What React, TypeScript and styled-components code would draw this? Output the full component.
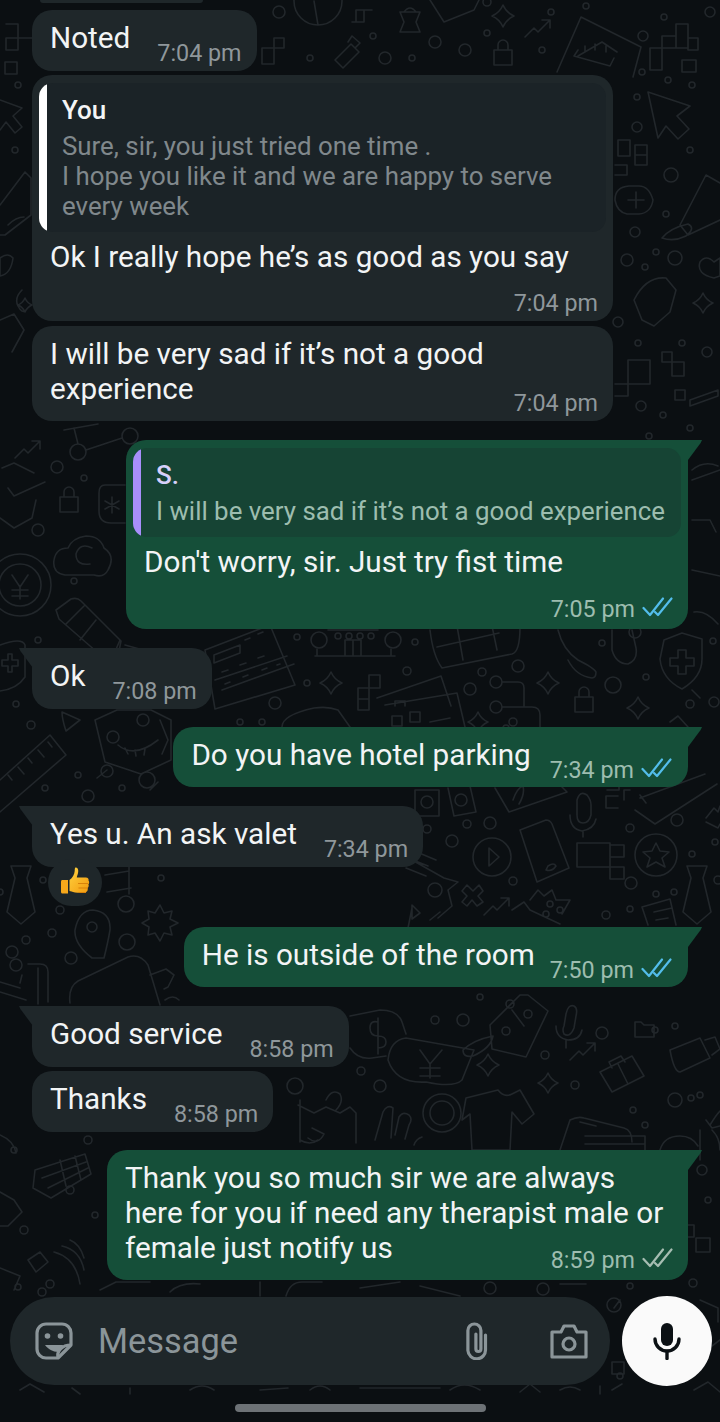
import React from "react";
import styled, { createGlobalStyle } from "styled-components";

const GlobalStyle = createGlobalStyle`
  html, body {
    margin: 0;
    padding: 0;
    background: #0b0f12;
  }
`;

const Page = styled.div`
  position: relative;
  width: 720px;
  height: 1422px;
  overflow: hidden;
  display: flex;
  flex-direction: column;
  background: #0b0f12;
  font-family: Roboto, "Liberation Sans", sans-serif;
`;

const Wallpaper = styled.svg`
  position: absolute;
  inset: 0;
  fill: none;
  stroke: #22272b;
  stroke-width: 1.6;
  stroke-linejoin: round;
  stroke-linecap: round;
`;

const Chat = styled.div`
  position: relative;
  display: flex;
  flex-direction: column;
  padding: 0 32px;
`;

const Sliver = styled.div`
  width: 163px;
  height: 3px;
  margin-left: 8px;
  background: #1f272a;
  border-radius: 0 0 12px 12px;
`;

const Row = styled.div<{ $out?: boolean; $top: number }>`
  position: relative;
  display: flex;
  justify-content: ${(p) => (p.$out ? "flex-end" : "flex-start")};
  margin-top: ${(p) => p.$top}px;
`;

const Bubble = styled.div<{ $out?: boolean; $tail?: boolean; $width?: number; $stack?: boolean }>`
  position: relative;
  box-sizing: border-box;
  display: flex;
  flex-direction: ${(p) => (p.$stack ? "column" : "row")};
  align-items: ${(p) => (p.$stack ? "stretch" : "flex-end")};
  ${(p) => (p.$width ? `width: ${p.$width}px;` : "")}
  padding: ${(p) => (p.$stack ? (p.$out ? "10px 15px 9px 18px" : "10px 15px 7px 18px") : p.$out ? "10px 16px 6px 18px" : "10px 15px 7px 18px")};
  background: ${(p) => (p.$out ? "#154f39" : "#1f272a")};
  border-radius: ${(p) => (p.$tail ? (p.$out ? "20px 0 20px 20px" : "0 20px 20px 20px") : "20px")};

  ${(p) =>
    p.$tail
      ? `&::before {
    content: "";
    position: absolute;
    top: 0;
    ${p.$out ? "right: -14px;" : "left: -13px;"}
    width: 14px;
    height: 20px;
    background: inherit;
    clip-path: ${p.$out ? "polygon(0 0, 100% 0, 90% 15%, 0 100%)" : "polygon(0 0, 100% 0, 100% 100%, 10% 15%)"};
  }`
      : ""}
`;

const Text = styled.div<{ $stack?: boolean }>`
  font-size: 29.7px;
  line-height: 35px;
  color: #f2f4f5;
  white-space: nowrap;
  ${(p) => (p.$stack ? "" : "margin-bottom: 9px;")}
`;

const Meta = styled.div<{ $stack?: boolean; $overlap?: number; $gap?: number }>`
  display: flex;
  align-items: center;
  gap: 7px;
  height: 26px;
  ${(p) =>
    p.$stack
      ? `align-self: flex-end; margin-top: ${p.$overlap ?? 0}px;`
      : `margin-left: ${p.$gap ?? 27}px;`}
`;

const Time = styled.span<{ $out?: boolean }>`
  font-size: 23.3px;
  line-height: 26px;
  margin-top: 3px;
  color: ${(p) => (p.$out ? "#9dbdaf" : "#8f979b")};
  white-space: nowrap;
`;

const Quote = styled.div<{ $out?: boolean }>`
  position: relative;
  overflow: hidden;
  box-sizing: border-box;
  margin: -2px -8px 7px -11px;
  padding: 12px 15px 11px 23px;
  background: ${(p) => (p.$out ? "#164434" : "#1b2327")};
  border-radius: 14px;

  &::before {
    content: "";
    position: absolute;
    left: 0;
    top: 0;
    bottom: 0;
    width: 8px;
    background: ${(p) => (p.$out ? "#a88ffb" : "#ffffff")};
  }
`;

const QuoteName = styled.div<{ $out?: boolean }>`
  font-size: 26px;
  line-height: 30px;
  font-weight: 500;
  color: ${(p) => (p.$out ? "#d6d0fa" : "#f4f5f6")};
  margin-bottom: 6px;
`;

const QuoteBody = styled.div<{ $out?: boolean }>`
  font-size: 25.85px;
  line-height: 30px;
  color: ${(p) => (p.$out ? "#9dbdaf" : "#80888c")};
  white-space: nowrap;
`;

const Reaction = styled.div`
  position: absolute;
  left: 16px;
  top: 53px;
  width: 54px;
  height: 47px;
  display: flex;
  align-items: center;
  justify-content: center;
  border-radius: 24px;
  background: #1f272a;
`;

const Composer = styled.div`
  position: relative;
  display: flex;
  align-items: center;
  gap: 12px;
  margin-top: 16px;
  padding: 0 8px 0 10px;
`;

const InputBar = styled.div`
  flex: 1;
  height: 88px;
  box-sizing: border-box;
  display: flex;
  align-items: center;
  padding: 0 22px 0 25px;
  border-radius: 44px;
  background: #1f272a;
`;

const Placeholder = styled.span`
  flex: 1;
  margin-left: 25px;
  font-size: 34.4px;
  color: #8b9599;
`;

const ClipSlot = styled.span`
  display: flex;
  margin-right: 61px;
`;

const MicButton = styled.div`
  width: 90px;
  height: 90px;
  display: flex;
  align-items: center;
  justify-content: center;
  border-radius: 50%;
  background: #fafafa;
`;

const HomeBar = styled.div`
  position: relative;
  align-self: center;
  width: 251px;
  height: 8px;
  margin-top: 18px;
  border-radius: 4px;
  background: #6d7276;
`;

const c = (x: number, y: number, r: number) =>
  `M${x - r} ${y}a${r} ${r} 0 1 0 ${2 * r} 0a${r} ${r} 0 1 0 ${-2 * r} 0`;
const spark = (x: number, y: number, s: number) => {
  const k = s * 0.3;
  return `M${x} ${y - s}Q${x + k} ${y - k} ${x + s} ${y}Q${x + k} ${y + k} ${x} ${y + s}Q${x - k} ${y + k} ${x - s} ${y}Q${x - k} ${y - k} ${x} ${y - s}z`;
};
const trend = (x: number, y: number) => `M${x} ${y}l9-9 4 4 12-12m-8 0h8v8`;
const lock = (x: number, y: number) =>
  `M${x - 9} ${y}h18v15h-18zM${x - 5} ${y}v-5a5 5 0 0 1 10 0v5`;
const box = (x: number, y: number, w: number, h: number) => `M${x} ${y}h${w}v${h}h${-w}z`;
const dots = (list: number[][]) => list.map(([x, y, r]) => c(x, y, r)).join("");

// wallpaper doodles, page coordinates, only the parts seen between the bubbles
const doodles = [
  dots([
    [18, 85, 3], [15, 150, 3], [279, 12, 6], [373, 36, 3], [310, 58, 3], [385, 58, 6], [412, 58, 3],
    [435, 42, 6], [465, 50, 6], [487, 33, 3], [542, 50, 3], [487, 2, 4], [551, 12, 3], [586, 6, 3],
    [643, 36, 5], [664, 17, 3], [710, 12, 5], [642, 72, 3], [668, 80, 3], [692, 85, 3], [637, 97, 3],
    [637, 127, 5], [690, 150, 3], [671, 175, 7], [666, 214, 3], [635, 232, 5], [627, 260, 6], [645, 267, 3],
    [656, 252, 3], [675, 258, 7], [618, 322, 5], [638, 343, 3], [682, 343, 3], [707, 352, 5], [641, 406, 5],
    [663, 415, 3], [690, 428, 3], [649, 436, 3],
    [57, 467, 6], [84, 478, 3], [38, 530, 6], [74, 581, 3], [38, 640, 3], [16, 704, 3], [31, 725, 4],
    [78, 775, 3], [45, 788, 3], [88, 796, 6], [122, 788, 3], [147, 780, 8],
    [297, 637, 3], [415, 642, 3], [275, 703, 6], [307, 683, 3], [407, 671, 4], [240, 722, 3], [262, 722, 3],
    [470, 689, 6], [482, 672, 4], [518, 666, 6], [602, 643, 3], [613, 685, 8], [646, 677, 3], [690, 704, 4],
    [714, 702, 5], [713, 641, 3], [506, 728, 3], [513, 722, 4],
    [427, 829, 4], [467, 824, 4], [490, 823, 6], [452, 841, 6], [513, 881, 4], [630, 828, 4], [631, 883, 6],
    [656, 894, 3], [674, 892, 3], [692, 854, 3], [715, 842, 3], [606, 915, 4], [630, 909, 3], [435, 890, 7],
    [677, 820, 6], [718, 880, 4],
    [126, 904, 8], [60, 910, 4], [52, 933, 4], [26, 940, 4], [43, 880, 3], [161, 878, 3], [71, 958, 6],
    [127, 942, 8], [0, 892, 3],
    [435, 1020, 4], [463, 1020, 6], [361, 1071, 4], [380, 1086, 6], [295, 1086, 8], [602, 1033, 6],
    [545, 1055, 4], [700, 1095, 3], [575, 1085, 4], [645, 1125, 3], [675, 1100, 7], [691, 1098, 3],
    [480, 997, 3], [675, 1026, 3], [633, 1110, 3], [655, 1030, 3],
    [70, 1190, 4], [24, 1230, 4], [88, 1140, 4], [95, 1215, 3], [14, 1150, 3], [50, 1284, 4],
    [693, 1283, 4], [702, 1170, 5], [708, 1200, 3], [614, 1305, 7], [630, 1286, 3], [620, 1376, 3],
    [18, 1287, 3], [42, 1292, 4], [543, 1289, 6], [490, 1288, 6],
  ]),
  // top right: circle chart, knots, padlocks, bank card, crossword
  `${c(318, 1, 24)}M318 25l-4-24`,
  `M352 22h12v-12h-8v12M364 10h8`,
  `M335 60l16-16l8 8-16 16zM348 42l4-6 8 7-5 5`,
  `${box(262, 48, 12, 16)}M274 48h10v-10h-10z`,
  `M400 12h20l-4 10 4 10h-20l4-10zM404 12q6-8 12 0`,
  lock(503, 50),
  `M430 0l14 22 30-12 5-10`,
  spark(503, 16, 11),
  trend(525, 37),
  `M557 72l24-55 60 30-8 30M578 56l24-14 15 10M578 50l-4 6 36 10 4-8M585 52v-6M595 50v-6M606 52v-6`,
  `${box(650, 48, 12, 22)}${box(662, 36, 14, 12)}${box(676, 24, 12, 24)}${box(688, 38, 10, 12)}${box(682, 60, 14, 12)}`,
  // cursor, coin, tag, heart, mitten
  `M648 92l42 14-13 10 12 13-11 10-12-13-8 12z`,
  `M615 200q0-13 14-14h10q10 0 14 14q-2 13-14 14h-12q-10-2-12-14zM636 192v16M628 200h16`,
  `M680 225l26-50 14 8M720 220l-32 15-8-10M662 238q8-10 26-14q8 4-2 12q-12 6-24 2z`,
  `M700 262q6-8 14 0q6-4 6-4v18l-6 2q-18-4-14-16z`,
  `M634 300q12-24 32-22l10 12-6 22-16 14-12-6z`,
  spark(703, 303, 10),
  `${box(618, 140, 12, 16)}${box(635, 145, 12, 10)}${box(635, 155, 12, 10)}M615 165h12v10h-12`,
  `${box(628, 360, 22, 24)}M615 384h13v12h-13M662 352h10v10h-10zM672 362h12v14h-12z`,
  `${box(675, 390, 10, 10)}M690 400l28-10v6l-28 10z`,
  // left strip
  `M6 24h12v14h14M6 38h12v12H6zM18 50v-12M5 62h12v12H5z`,
  `M0 100l22 8-9 8 9 11-7 6-9-11-6 8`,
  `M0 205L25 172l6 6v37L5 235H0M8 225q8-8 16-8`,
  `M0 258q8-6 13 0q-2 16-13 18zM22 290q-8 8-4 16t8 4`,
  `M0 320l14-6 10 16-12 22`,
  spark(25, 305, 7),
  // left column by the green bubble
  `${c(78, 452, 8)}${c(130, 436, 8)}M86 450l36-12M78 444l-4-16M64 430l34-6`,
  trend(15, 458),
  `M2 468l12-5 20 10M45 482L14 496l-6-8M36 500l-4 18-18 10L0 518`,
  lock(69, 497),
  `M125 485h-20q-6 0-6 8v18q0 12 12 12h14M112 497v16M105 501l14 8M105 509l14-8`,
  `M65 575q-13-2-11-15q2-12 14-12q4-10 18-12q14 0 18 12q12 8 4 22q-4 8-14 5zM92 548q-12-6-16 6q0 12 14 10`,
  `${c(20, 585, 31)}${c(20, 585, 21)}M12 575l8 12 8-12M20 587v12M12 590h16M12 596h16`,
  `M56 610l15-11q6-2 10 2l40 40-2 10-14 8-46-40zM66 624l18-18M80 640l16-20M120 640l-6 14`,
  `M0 645q22-8 25 0v32q-8 12-25 14M2 660h6v-6h4v6h6v6h-6v6h-4v-6H2z`,
  `M125 645l18 5 8 16-12 6`,
  // ruler, triangle, robot under the Ok bubble
  `M0 780L50 735l16 20L0 812M8 775l4 5M18 767l6 7M28 758l4 5M38 750l6 7M48 742l4 5`,
  `M62 712l18 8-14 11q-4-12-4-19z`,
  `M95 720l22-10 34 0 20 10v40l-30 14-36-12z${c(113, 737, 6)}${c(143, 720, 6)}M118 745q16 14 40-5M125 748l3 6M135 750l1 6M145 749l-1 6M107 770l-10 8${c(107, 771, 6)}`,
  `M160 720l8 20 -6 14M150 790l8-8`,
  // strip between Ok and the Do you row
  `M205 650l65-25 25 60-80 24zM215 680l72-24M222 690l72-26M214 655l26-10v8l-26 10zM245 640l5-2M258 634l5-2M222 672l6-2M240 665l6-2M258 658l6-2M225 684l5-2M243 677l5-2M262 670l5-2M280 664l-3 1`,
  `${c(319, 640, 8)}${c(393, 640, 8)}M315 656h80M317 648v8M391 648v8M345 656v-16h16v16M353 640v16${dots([[338, 636, 3], [349, 636, 3], [360, 636, 3], [371, 636, 3]])}M328 630h50`,
  spark(331, 683, 11),
  `${box(358, 688, 11, 22)}${box(369, 675, 11, 13)}M358 699h11`,
  `M377 698l64-22 10 30M385 705l72-12 8 34M392 716h10v10h-10zM410 712h10v10h-10zM395 706v-5h10v5M430 722l20-4`,
  `M430 630q3 26 12 38l70-14q8-2 8-27M437 647l62-14M463 660l-6-34M497 650l-5-24`,
  `M558 630q5 20 20 30q16 8 18 12q0 6-4 6q-16-2-24-18M612 630v20q4 14 16 14q10-4 8-16l-4-18`,
  `${c(635, 632, 6)}`,
  `${c(496, 682, 6)}M502 682h16q6 0 6 6v18${c(496, 707, 6)}M502 707h30q8 0 8 8v12`,
  spark(548, 683, 11),
  lock(584, 697),
  spark(638, 708, 11),
  `M664 640l18-7 20 6v20q0 18-20 30q-20-10-22-30zM678 650h8v8h8v8h-8v8h-8v-8h-8v-8h8z`,
  `M670 722l8-6 10 11`,
  `M282 727q0-12 32-19q14-2 24 2l12 17`,
  spark(478, 722, 10),
  // right of the Yes u bubble
  `${box(415, 790, 24, 26)}${c(427, 802, 6)}M448 788l6 28 22-4-6-26${c(461, 800, 6)}`,
  `M495 788l14 24 58-20-8-8M513 800q4-12 10-14q2 8-4 18`,
  `${c(492, 857, 19)}M489 848l10 9-10 9z`,
  `M520 830l26-10q4 0 6 4l17 44-32 14zM548 866q6-4 8 0q-4 6-10 4z`,
  `M577 800q3-10 10-5q4 5 4 10v10q-2 8-8 8t-6-8zM570 815q0 14 12 16q12-2 14-12M583 831v6`,
  `M607 790h12v-4M618 808h-12v-12h12M630 790h-6v10`,
  `${box(610, 845, 14, 12)}M577 843h33v24h-33zM610 867h14v12h-14z`,
  `${c(656, 855, 21)}M656 843l4 8 9 1-7 6 3 9-9-5-9 5 3-9-7-6 9-1z`,
  `M640 798l65-24M635 810l20 14 62-40M640 795l6 8`,
  `M687 866h20l-4 12 8 34-14 12-14-12 8-34z`,
  `M706 818l8-10 4 4 2-6M706 822l12 6 2-4`,
  `M467 885l6 6 6-6 4 6-5 5 5 6-6 4-5-6-5 6-5-4 5-6-5-5z`,
  trend(484, 915),
  `M512 910l12-8 6 8 30 14M530 900l8-10 6 6 8-6 4 10h14l-8 14${c(550, 904, 3)}${c(560, 910, 3)}${c(546, 914, 3)}`,
  `M412 860l32 18 14 4-10 8 4 16-14 12M412 850l24 10M408 858l20 8M406 868l20 8M412 908l-4 20M430 920l10-8`,
  `M412 905l8 8-8 6z`,
  `M648 925l-6-18 28-8 6 26M654 912l18-4M656 920l12-2`,
  // left, under the reaction
  `M11 866h20l-4 12 8 34-14 12-14-12 8-34z`,
  `M105 875l24-4M107 892l24-4M129 862v32`,
  `M92 958q-18-14-17-28q4-20 18-20q18 2 17 20q-2 12-6 28z${c(92, 927, 5)}`,
  `M160 905l4 8 8-2-2 8 8 4-8 4 2 8-8-2-4 8-5-8-7 2 1-8-7-4 7-4-1-8 7 2z`,
  `${c(12, 952, 6)}${c(16, 965, 6)}M22 975l-2 8M0 982l20 6M28 964h12q8 0 8 8v30M0 992l26 8M38 968v36`,
  `M70 1003q-2-16 8-22l50-24q12-4 20 8l12 40`,
  `M150 975l16-6 8 6-6 12-4 2`,
  `M165 1000q8-6 14 0`,
  // middle right, doodles beside Good service
  `M350 1016l30-6q18 0 22 12l4 12M350 1048q8 12 22 10l14-2M378 1022q-8-2-8 6t8 8t8 6t-8 6M378 1018v36`,
  `M388 1060q2-20 18-22l68 12-12 30q-8 8-36 2q-30 2-38-22zM420 1050l10 14 12-14M430 1064v14M420 1068h20M420 1076h20`,
  `M490 1025l30-30h8l20 16-22 46-34-8zM512 1010l12 16${c(510, 1004, 4)}${c(528, 1014, 4)}${c(506, 1031, 4)}M463 1050q10-10 30-14q-2 12-20 20q-10 2-10-6z`,
  spark(488, 1065, 11),
  `M566 1014q2-10 8-8q4 2 2 10l-2 12q-4 10-10 6q-2-4 0-8zM556 1026q0 12 12 14q12 0 14-10M566 1040l0 8`,
  `M635 1022h6l3 3h10v12h-19z`,
  `M670 1050l30-12 10 20-30 14q-6 0-10-22zM705 1040l10-3 5 12-8 6`,
  trend(570, 1060),
  `M600 1072l32-16 12 20-32 16zM612 1068l-3-6 12-6 4 6M618 1064l10 20`,
  spark(548, 1083, 10),
  `M466 1098l32-8q6 8 14 4l8-4 14 24-12 10-10-12-2 38h-38l-2-36-8 6z`,
  `${c(442, 1113, 12)}${c(442, 1113, 19)}`,
  `M300 1100v42M298 1105l16 8 12-6 14 6 10-6 6 6v30M326 1100q6-12 14-6q4 8 -4 16M300 1140q10 6 18 0M312 1128l12 6q-6 12-16 4`,
  `M375 1140l8-28q4-8 10-4l-2 30M395 1135l4-18q4-6 10-2q4 4 0 10l-4 14M414 1145q2-6 8-8`,
  `M560 1150l10-30q8-4 14-2l40 10q8 2 8 14M580 1122l16 4M585 1136h60v14M585 1144h60`,
  `M660 1150q4-14 20-14q12 0 18 10`,
  `M710 1125q6-10 10-14M706 1120l6 8 8-2`,
  // left column by the last bubble
  `M35 1170l50-16 6 20-40 24-18-10zM42 1178l44-16M48 1188l40-20M60 1160l6 26M75 1156l6 24`,
  `M70 1240q10 4 14 18M62 1246q18 4 22 24M54 1252q22 6 26 32`,
  `M0 1135q14 6 16 18M0 1192l14 8 8 12-14 14H0M0 1268l20 8-6 14`,
  `M28 1260l12-8 8 10-12 10z`,
  // right strip and gaps
  `${box(696, 1238, 14, 14)}${box(682, 1225, 12, 12)}M700 1130v30M712 1130q8 8 8 20`,
  `M692 470q12-10 26-4M692 480l28-10M692 520h18l6 12M692 570l28 6M694 612q12-2 24 12M692 690l8 8`,
  `M620 1300l-6 8M632 1320q10 0 12 10M612 1390l10-6`,
  `${box(612, 1362, 12, 12)}`,
  `M700 1300l18 8v14M694 1390l14-8 12 10M720 1340l-8 6`,
  `M20 1390l10-6 14 8M72 1388l8 6M130 1388v6M190 1390q12-8 24 0M260 1390l28-2M310 1390q10-8 20 0M360 1388h80M450 1390q14-10 30 0M520 1392l10-8 10 8M560 1390q10-6 20 0M600 1386v8`,
  `M100 1290l16-8h34M170 1292q10-10 30-8M260 1282v14M286 1296q4-14 16-14h20M360 1288l40-6M420 1286l40 10M560 1284h26`,
].join("");

const Checks = ({ color }: { color: string }) => (
  <svg width="31" height="20" viewBox="0 0 31 20" fill="none" stroke={color} strokeWidth="2.2" strokeLinecap="round" strokeLinejoin="round">
    <path d="M1.5 11l6.5 7L21 1.5" />
    <path d="M13 15l3 3L29.5 1.5" />
  </svg>
);

const ThumbsUp = () => (
  <svg width="29" height="31" viewBox="0 0 29 31">
    <defs>
      <linearGradient id="thumb" x1="0" y1="0" x2="1" y2="1">
        <stop offset="0" stopColor="#ffd23f" />
        <stop offset="1" stopColor="#f39a0e" />
      </linearGradient>
    </defs>
    <path
      fill="url(#thumb)"
      d="M14.5 .5c2.2 0 3 2 2.7 4.5-.3 2.4-1.4 4.5-1.4 5.5h9c2.4 0 3 1.8 2.8 3.2.8 1 .8 2.8-.2 3.6.6 1.3.3 3-.8 3.7.5 1.5 0 4-2.6 4.5-3 .5-7 .5-10-.1-3-.6-4.2-1.4-5.5-1.4V13c3-2 5-5.5 5.2-9 .1-2 .2-3.5.8-3.5z"
    />
    <path fill="#f7a81b" d="M1.5 13H7v13.5H1.5C.5 26.5 0 25.8 0 25V14.5C0 13.6.5 13 1.5 13z" />
    <path fill="none" stroke="#d9820a" strokeWidth="1" d="M17 16.5h10M17.5 21H27M18 25.5h7" />
  </svg>
);

const StickerIcon = () => (
  <svg width="38" height="38" viewBox="0 0 38 38" fill="none" stroke="#8b9599" strokeWidth="3.2" strokeLinejoin="round">
    <path d="M11 2h16a9 9 0 0 1 9 9v12L23 36H11a9 9 0 0 1-9-9V11a9 9 0 0 1 9-9z" />
    <path d="M23 36c-1.5-7 4-13 13-13" />
    <path d="M10 23h18c-1 4-3 6-5 7-5 0-10-3-13-7z" fill="#8b9599" stroke="none" />
    <circle cx="12.5" cy="14" r="2.8" fill="#8b9599" stroke="none" />
    <circle cx="25.5" cy="14" r="2.8" fill="#8b9599" stroke="none" />
  </svg>
);

const ClipIcon = () => (
  <svg width="25" height="38" viewBox="0 0 25 38" fill="none" stroke="#8b9599" strokeWidth="3.2" strokeLinecap="round">
    <path d="M23 13v14.5a8.8 8.8 0 0 1-17.6 1V8.5a6.5 6.5 0 0 1 13 0V27a2.5 2.5 0 0 1-5 0V12" transform="translate(-1.5 0)" />
  </svg>
);

const CameraIcon = () => (
  <svg width="38" height="35" viewBox="0 0 38 35" fill="none" stroke="#8b9599" strokeWidth="3.2" strokeLinejoin="round">
    <path d="M2 8h9l3-6h10l3 6h9v25H2z" />
    <circle cx="19" cy="20" r="6" />
  </svg>
);

const MicIcon = () => (
  <svg width="28" height="37" viewBox="0 0 28 37" fill="none" stroke="#0b1014" strokeWidth="3.4" strokeLinecap="round">
    <rect x="8" y="0" width="12" height="23" rx="6" fill="#0b1014" stroke="none" />
    <path d="M2 16a12 12 0 0 0 24 0" />
    <path d="M14 28.5v7" />
  </svg>
);

export default function App() {
  return (
    <Page>
      <GlobalStyle />
      <Wallpaper width="720" height="1422" viewBox="0 0 720 1422">
        <path d={doodles} />
      </Wallpaper>

      <Chat>
        <Sliver />

        <Row $top={7}>
          <Bubble>
            <Text>Noted</Text>
            <Meta><Time>7:04 pm</Time></Meta>
          </Bubble>
        </Row>

        <Row $top={4}>
          <Bubble $stack $width={581}>
            <Quote>
              <QuoteName>You</QuoteName>
              <QuoteBody>
                Sure, sir, you just tried one time .<br />
                I hope you like it and we are happy to serve<br />
                every week
              </QuoteBody>
            </Quote>
            <Text $stack>Ok I really hope he’s as good as you say</Text>
            <Meta $stack $overlap={14}><Time>7:04 pm</Time></Meta>
          </Bubble>
        </Row>

        <Row $top={5}>
          <Bubble $stack $width={581}>
            <Text $stack>I will be very sad if it’s not a good<br />experience</Text>
            <Meta $stack $overlap={-18}><Time>7:04 pm</Time></Meta>
          </Bubble>
        </Row>

        <Row $out $top={19}>
          <Bubble $out $tail $stack $width={562}>
            <Quote $out>
              <QuoteName $out>S.</QuoteName>
              <QuoteBody $out>I will be very sad if it’s not a good experience</QuoteBody>
            </Quote>
            <Text $stack>Don't worry, sir. Just try fist time</Text>
            <Meta $stack $overlap={15}>
              <Time $out>7:05 pm</Time>
              <Checks color="#53bdeb" />
            </Meta>
          </Bubble>
        </Row>

        <Row $top={19}>
          <Bubble $tail>
            <Text>Ok</Text>
            <Meta><Time>7:08 pm</Time></Meta>
          </Bubble>
        </Row>

        <Row $out $top={18}>
          <Bubble $out $tail>
            <Text>Do you have hotel parking</Text>
            <Meta $gap={19}>
              <Time $out>7:34 pm</Time>
              <Checks color="#53bdeb" />
            </Meta>
          </Bubble>
        </Row>

        <Row $top={19}>
          <Bubble $tail>
            <Text>Yes u. An ask valet</Text>
            <Meta><Time>7:34 pm</Time></Meta>
          </Bubble>
          <Reaction><ThumbsUp /></Reaction>
        </Row>

        <Row $out $top={60}>
          <Bubble $out $tail>
            <Text>He is outside of the room</Text>
            <Meta $gap={15}>
              <Time $out>7:50 pm</Time>
              <Checks color="#53bdeb" />
            </Meta>
          </Bubble>
        </Row>

        <Row $top={19}>
          <Bubble $tail>
            <Text>Good service</Text>
            <Meta><Time>8:58 pm</Time></Meta>
          </Bubble>
        </Row>

        <Row $top={4}>
          <Bubble>
            <Text>Thanks</Text>
            <Meta><Time>8:58 pm</Time></Meta>
          </Bubble>
        </Row>

        <Row $out $top={18}>
          <Bubble $out $tail $stack $width={581}>
            <Text $stack>
              Thank you so much sir we are always<br />
              here for you if need any therapist male or<br />
              female just notify us
            </Text>
            <Meta $stack $overlap={-20}>
              <Time $out>8:59 pm</Time>
              <Checks color="#a6bdb2" />
            </Meta>
          </Bubble>
        </Row>
      </Chat>

      <Composer>
        <InputBar>
          <StickerIcon />
          <Placeholder>Message</Placeholder>
          <ClipSlot><ClipIcon /></ClipSlot>
          <CameraIcon />
        </InputBar>
        <MicButton><MicIcon /></MicButton>
      </Composer>
      <HomeBar />
    </Page>
  );
}
